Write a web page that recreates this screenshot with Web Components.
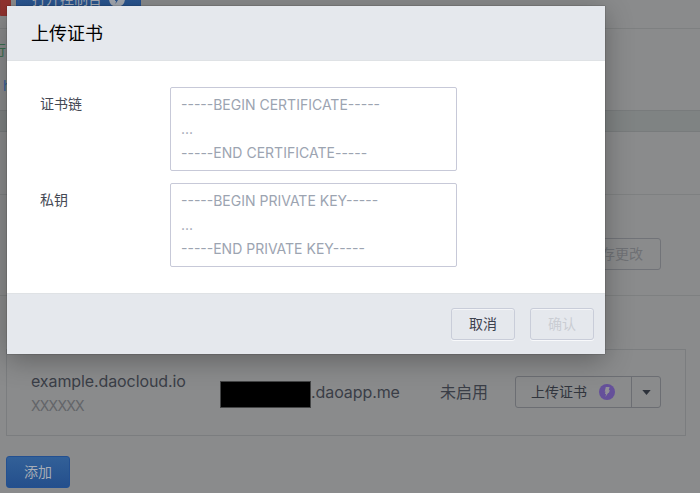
<!DOCTYPE html>
<html lang="zh-CN">
<head>
<meta charset="utf-8">
<title>上传证书</title>
<style>
html,body{margin:0;width:700px;height:493px;overflow:hidden}
body{background:#8a8b8c;font:14px/24px Inter,"Noto Sans CJK SC",sans-serif;color:#3a3e47;position:relative}
</style>
</head>
<body>
<app-page></app-page>
<cert-dialog heading="上传证书">
  <form-field label="证书链"><span>-----BEGIN CERTIFICATE-----</span><span>...</span><span style="letter-spacing:.02px">-----END CERTIFICATE-----</span></form-field>
  <form-field label="私钥"><span>-----BEGIN PRIVATE KEY-----</span><span>...</span><span>-----END PRIVATE KEY-----</span></form-field>
  <ui-button slot="actions">取消</ui-button>
  <ui-button slot="actions" kind="disabled">确认</ui-button>
</cert-dialog>
<script>
function define(name, html) {
  const t = document.createElement('template');
  t.innerHTML = html;
  customElements.define(name, class extends HTMLElement {
    constructor() {
      super();
      this.attachShadow({mode: 'open'}).appendChild(t.content.cloneNode(true));
    }
    connectedCallback() {
      this.shadowRoot.querySelectorAll('[data-attr]').forEach(e => {
        e.textContent = this.getAttribute(e.dataset.attr) || '';
      });
    }
  });
}
define('ui-button', `<style>
:host{display:flex;align-items:center;justify-content:center;box-sizing:border-box;height:32px;padding:0 17px;border:1px solid #c9cdd9;border-radius:3px;color:#3d424e;font-size:14px;line-height:20px;white-space:nowrap;box-shadow:0 1px 0 #f8f9fb,inset 0 1px 0 #f4f5f8}
:host([kind=disabled]){color:#cacdd3}
:host([kind=dim]){border-color:#717378;color:#6f7175;box-shadow:none}
:host([kind=primary]){border-color:#235091;background:linear-gradient(#326098,#244f8c);color:#a7adb6;box-shadow:none}
:host([kind=danger]){border-color:#8a3330;background:#92322f;box-shadow:none}
</style><slot></slot>`);
define('bolt-icon', `<style>:host{display:block;width:16px;height:16px}svg{display:block;width:100%;height:100%}</style>
<svg viewBox="0 0 16 16"><circle cx="8" cy="8" r="8" style="fill:var(--disc,#65509a)"/><path d="M6.8 3.1h3.8L9.7 6.2l1.1-.1-.8 2.6-.9.2-2.7 4.2.7-3.2-1.1.1.5-2.4-.8.1z" style="fill:var(--bolt,#929197)"/></svg>`);
define('split-button', `<style>
:host{display:flex;box-sizing:border-box;width:146px;height:32px;border:1px solid #6c6e73;border-radius:3px;color:#31353d}
.main{display:flex;align-items:center;width:115px;box-sizing:border-box;padding-left:15px;gap:12px;line-height:20px}
.more{flex:1;display:flex;align-items:center;justify-content:center;border-left:1px solid #6c6e73}
svg{display:block}
</style><div class="main"><slot></slot><bolt-icon></bolt-icon></div><div class="more"><svg width="9" height="5"><path d="M.3 0h8.4L4.5 5z" fill="#2d323b"/></svg></div>`);
define('domain-row', `<style>
:host{display:flex;box-sizing:border-box;width:680px;height:87px;margin:53px 0 0 6px;border:1px solid #7b7d7f;padding-left:24px;color:#3a3e47;font-size:16px}
.name{width:189px;padding-top:19px;line-height:24px;letter-spacing:-.1px}
.name small{display:block;font-size:14px;line-height:26px;color:#636569;letter-spacing:-.75px}
.cname{display:flex;width:220px;padding-top:31px;line-height:24px;letter-spacing:-.08px}
.mask{width:89px;height:25px;background:#000;border:1px solid #444546}
.cname span{margin-top:-1px}
.state{width:75px;padding-top:30px;line-height:24px}
split-button{margin-top:26px;font-size:14px}
</style>
<div class="name">example.daocloud.io<small>XXXXXX</small></div>
<div class="cname"><div class="mask"></div><span>.daoapp.me</span></div>
<div class="state">未启用</div><split-button>上传证书</split-button>`);
define('app-page', `<style>
:host{display:block;width:700px;height:493px;overflow:hidden}
.top{display:flex;gap:5px;border-bottom:1px solid #7e8081;box-sizing:border-box;height:29px}
.top ui-button{margin-top:-17px;box-sizing:border-box}
.top ui-button[kind=danger]{width:11px;margin-top:-16px;border-radius:0 3px 3px 0;padding:0}
.top ui-button[kind=primary]{width:125px;padding:0;--disc:#a4a9b1;--bolt:#29548f}
.in{display:flex;align-items:center;gap:7px}
.info{height:81px;line-height:24px;box-sizing:border-box;padding-top:9px;overflow:hidden}
.run{color:#38704f;margin-left:-8px}.link{color:#2f5f9c;margin:12px 0 0 3px}
.band{height:22px;box-sizing:border-box;background:#7f8383;border:solid #787b7c;border-width:1px 0}
.title{height:63px;box-sizing:border-box;border-bottom:1px solid #7e8081}
.save{height:101px;box-sizing:border-box;border-bottom:1px solid #7e8081;display:flex;justify-content:flex-end;padding:43px 39px 0 0}
.add{display:flex;margin:20px 0 0 6px}
</style>
<div class="top"><ui-button kind="danger"></ui-button><ui-button kind="primary"><div class="in"><span>打开控制台</span><bolt-icon></bolt-icon></div></ui-button></div>
<div class="info"><div class="run">行</div><div class="link">h</div></div>
<div class="band"></div><div class="title"></div>
<div class="save"><ui-button kind="dim">保存更改</ui-button></div>
<domain-row></domain-row>
<div class="add"><ui-button kind="primary">添加</ui-button></div>`);
define('form-field', `<style>
:host{display:flex}
label{width:130px;line-height:20px;padding-top:7px;font-size:14px;color:#454954}
.box{box-sizing:border-box;width:287px;height:84px;border:1px solid #c7c9d8;border-radius:2px;padding:5px 10px;display:flex;flex-direction:column;color:#9ca4b1;line-height:24px;font-size:14px;background:#fff}
</style><label data-attr="label"></label><div class="box"><slot></slot></div>`);
define('cert-dialog', `<style>
:host{position:absolute;left:7px;top:6px;width:598px;height:348px;display:flex;flex-direction:column;background:#fff;box-shadow:0 0 1px rgba(0,0,0,.6),0 6px 26px rgba(0,0,0,.3)}
header{height:55px;box-sizing:border-box;background:#e5e8ed;border-bottom:1px solid #dfe2e5;padding:1px 24px 0;font-size:18px;line-height:54px;color:#000}
main{flex:1;padding:26px 0 0 33px;display:flex;flex-direction:column;gap:12px}
footer{height:61px;box-sizing:border-box;background:#e5e8ed;border-top:1px solid #dfe2e5;padding:14px 11px 0;display:flex;justify-content:flex-end;gap:15px}
</style><header data-attr="heading"></header><main><slot></slot></main><footer><slot name="actions"></slot></footer>`);
</script>
</body>
</html>
